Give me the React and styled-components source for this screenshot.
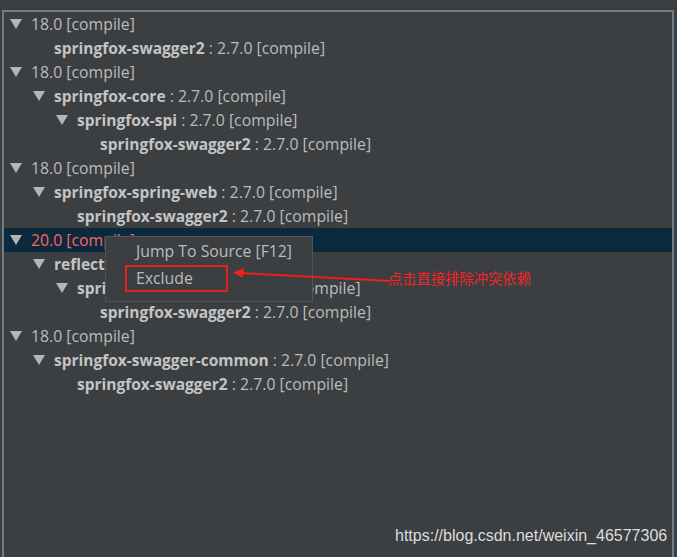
import React from 'react';
import styled, { createGlobalStyle } from 'styled-components';

const rows = [
    { level: 0, version: '18.0 [compile]', open: true },
    { level: 1, name: 'springfox-swagger2', version: '2.7.0 [compile]' },
    { level: 0, version: '18.0 [compile]', open: true },
    { level: 1, name: 'springfox-core', version: '2.7.0 [compile]', open: true },
    { level: 2, name: 'springfox-spi', version: '2.7.0 [compile]', open: true },
    { level: 3, name: 'springfox-swagger2', version: '2.7.0 [compile]' },
    { level: 0, version: '18.0 [compile]', open: true },
    { level: 1, name: 'springfox-spring-web', version: '2.7.0 [compile]', open: true },
    { level: 2, name: 'springfox-swagger2', version: '2.7.0 [compile]' },
    { level: 0, version: '20.0 [compile]', open: true, selected: true },
    { level: 1, name: 'reflections', version: '0.9.11 [compile]', open: true },
    { level: 2, name: 'springfox-spring-web', version: '2.7.0 [compile]', open: true },
    { level: 3, name: 'springfox-swagger2', version: '2.7.0 [compile]' },
    { level: 0, version: '18.0 [compile]', open: true },
    { level: 1, name: 'springfox-swagger-common', version: '2.7.0 [compile]', open: true },
    { level: 2, name: 'springfox-swagger2', version: '2.7.0 [compile]' },
];

const App = () => {
    return (
        <Screen>
            <GlobalStyle />
            <Panel>
                {rows.map((row, i) => (
                    <Row key={i} $selected={row.selected}>
                        <Indent $level={row.level} />
                        <Toggle>
                            {row.open && (
                                <svg width="12" height="10" viewBox="0 0 12 10">
                                    <polygon points="0,0 12,0 6,10" fill="#b3b5b7" />
                                </svg>
                            )}
                        </Toggle>
                        {row.name ? (
                            <Label>
                                <Name>{row.name}</Name> : {row.version}
                            </Label>
                        ) : (
                            <Label $conflict={row.selected}>{row.version}</Label>
                        )}
                    </Row>
                ))}
            </Panel>

            <Menu>
                <MenuItem>Jump To Source [F12]</MenuItem>
                <MenuItem>Exclude</MenuItem>
            </Menu>
            <Highlight />
            <Arrow width="160" height="20" viewBox="0 0 160 20">
                <line x1="157" y1="14" x2="8" y2="6" stroke="#f21d1d" strokeWidth="2" />
                <polygon points="0,5.5 11,1 10,11" fill="#f21d1d" />
            </Arrow>
            <Note>点击直接排除冲突依赖</Note>
            <Watermark>https://blog.csdn.net/weixin_46577306</Watermark>
        </Screen>
    );
};

export default App;

const GlobalStyle = createGlobalStyle`
    html, body {
        margin: 0;
        padding: 0;
        background: #3c3f41;
        overflow: hidden;
    }
`;

const Screen = styled.div`
    position: relative;
    width: 677px;
    height: 557px;
    padding-top: 10px;
    box-sizing: border-box;
    background: #3c3f41;
    font-family: 'Open Sans', 'Noto Sans', sans-serif;
    overflow: hidden;
`;

const Panel = styled.div`
    margin-left: 2px;
    width: 668px;
    height: 600px;
    border: 2px solid #6c7d8c;
    border-bottom: none;
`;

const Row = styled.div`
    display: flex;
    align-items: center;
    height: 24px;
    padding-left: 4px;
    font-size: 15.8px;
    color: #bbbbbb;
    white-space: nowrap;
    background: ${p => (p.$selected ? '#0d293e' : 'transparent')};
`;

const Indent = styled.span`
    flex: none;
    width: ${p => p.$level * 23}px;
`;

const Toggle = styled.span`
    flex: none;
    display: flex;
    align-items: center;
    width: 23px;
    padding-left: 2px;
    box-sizing: border-box;
`;

const Label = styled.span`
    color: ${p => (p.$conflict ? '#ff6464' : '#bbbbbb')};
`;

const Name = styled.b`
    font-weight: 700;
    font-size: 15.5px;
    color: #c4c4c4;
`;

const Menu = styled.div`
    position: absolute;
    left: 105px;
    top: 236px;
    width: 208px;
    height: 66px;
    box-sizing: border-box;
    background: #3c3f41;
    border: 1px solid #515558;
    display: flex;
    flex-direction: column;
`;

const MenuItem = styled.div`
    height: 27px;
    display: flex;
    align-items: center;
    padding-left: 30px;
    font-size: 15.8px;
    color: #bbbbbb;
`;

const Highlight = styled.div`
    position: absolute;
    left: 125px;
    top: 265px;
    width: 103px;
    height: 27px;
    box-sizing: border-box;
    border: 2px solid #e3221f;
`;

const Arrow = styled.svg`
    position: absolute;
    left: 233px;
    top: 267px;
`;

const Note = styled.div`
    position: absolute;
    left: 388px;
    top: 267px;
    font-family: 'Noto Sans CJK SC', sans-serif;
    font-size: 14.3px;
    color: #f42424;
`;

const Watermark = styled.div`
    position: absolute;
    left: 395px;
    top: 527px;
    font-family: 'Liberation Sans', Arial, sans-serif;
    font-size: 16px;
    color: #dcdcdc;
`;
